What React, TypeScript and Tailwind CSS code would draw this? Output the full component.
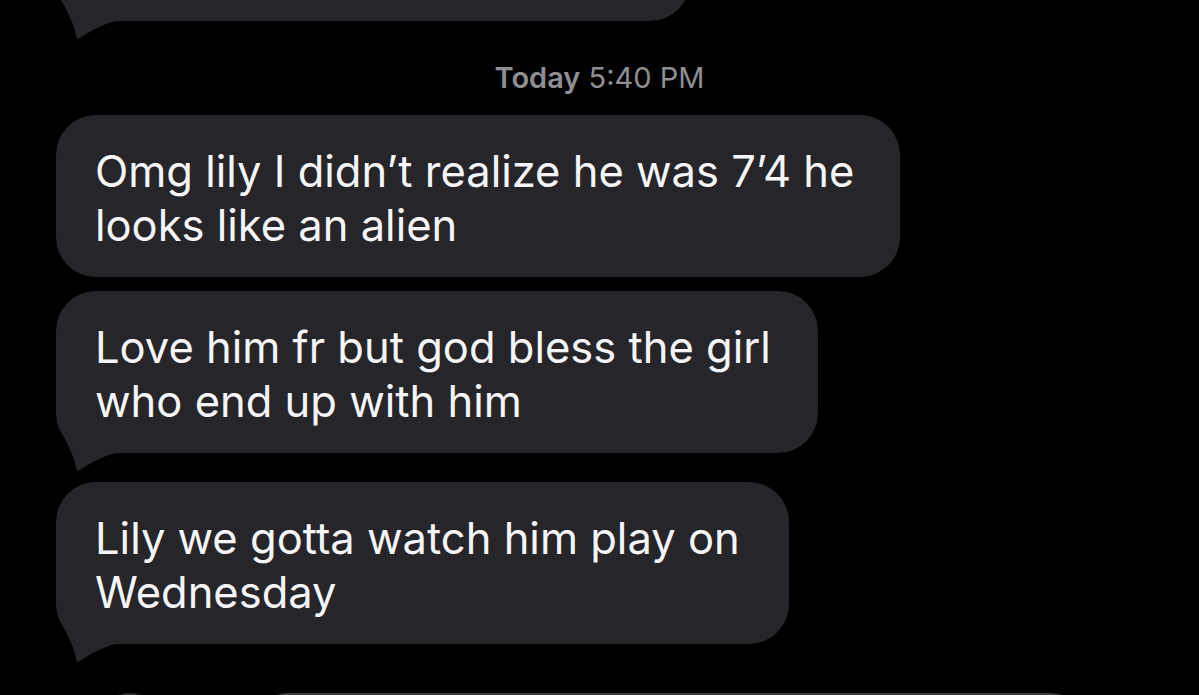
import React from "react";

function Tail() {
  return (
    <svg
      className="absolute left-0 bottom-[-20px]"
      width="60"
      height="60"
      viewBox="0 0 60 60"
      aria-hidden="true"
    >
      <path
        d="M0,0 C3,20 15,34 19,50 C20,54 20,57 22,58 C30,54 42,44 60,40 L60,0 Z"
        fill="#26262a"
      />
    </svg>
  );
}

function Bubble({
  lines,
  width,
  tail,
  className,
}: {
  lines: string[];
  width: string;
  tail?: boolean;
  className?: string;
}) {
  return (
    <div className={`relative ml-[56px] ${width} ${className ?? ""}`}>
      {tail && <Tail />}
      <div className="relative rounded-[40px] bg-[#26262a] pl-[39px] pt-[29px] pb-[25px] text-[43.5px] leading-[54px] text-[#f5f5f7] whitespace-nowrap">
        {lines.map((l, i) => (
          <div key={i}>{l}</div>
        ))}
      </div>
    </div>
  );
}

export default function App() {
  return (
    <div
      className="w-full h-[695px] overflow-hidden bg-black flex flex-col"
      style={{ fontFamily: "Inter, 'Noto Sans', sans-serif" }}
    >
      <div className="relative ml-[56px] w-[634px] mt-[-141px]">
        <Tail />
        <div className="relative h-[162px] rounded-[40px] bg-[#26262a]" />
      </div>

      <div className="mt-[41px] text-center text-[29px] leading-[32px] text-[#8e8e93]">
        <span className="font-semibold">Today</span> 5:40 PM
      </div>

      <Bubble
        className="mt-[21px]"
        width="w-[844px]"
        lines={["Omg lily I didn\u2019t realize he was 7\u20194 he", "looks like an alien"]}
      />
      <Bubble
        className="mt-[14px]"
        width="w-[762px]"
        tail
        lines={["Love him fr but god bless the girl", "who end up with him"]}
      />
      <Bubble
        className="mt-[29px]"
        width="w-[733px]"
        tail
        lines={["Lily we gotta watch him play on", "Wednesday"]}
      />

      <div className="mt-[49px] flex items-start">
        <div className="ml-[94px] w-[72px] h-[72px] shrink-0 rounded-full bg-[#2c2c2e]" />
        <div className="ml-[86px] w-[834px] h-[72px] shrink-0 rounded-full border-2 border-[#3a3a3c] bg-black" />
      </div>
    </div>
  );
}
